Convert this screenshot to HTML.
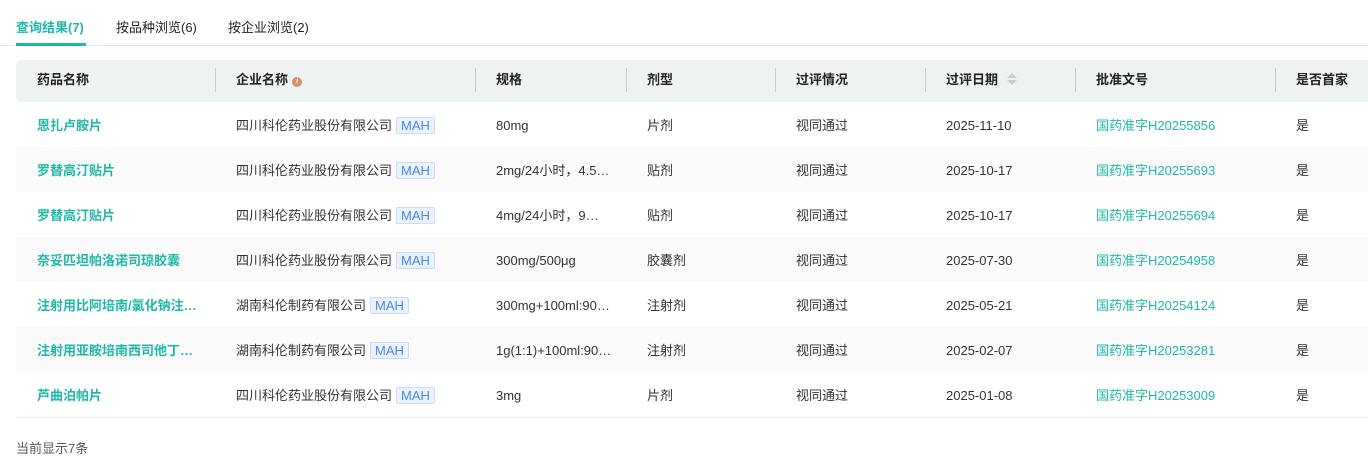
<!DOCTYPE html>
<html><head><meta charset="utf-8"><style>
*{margin:0;padding:0;box-sizing:border-box}
body{width:1368px;height:472px;overflow:hidden;background:#fff;font-family:"Liberation Sans","Noto Sans CJK SC",sans-serif;font-size:13px;color:#333}
.tabs{position:absolute;top:0;left:0;width:1368px;height:46px;border-bottom:1px solid #e8e8e8}
.tab{position:absolute;top:19px;font-size:13px;color:#222;line-height:18px}
.tab.a{color:#1fb8a6;font-weight:bold}
.ul{position:absolute;left:16px;top:43px;width:70px;height:3px;background:#1fb8a6}
.hdr{position:absolute;left:16px;top:60px;width:1380px;height:42px;background:#eff2f3;border-radius:6px}
.h{position:absolute;top:71px;font-weight:bold;color:#222;line-height:18px;height:18px}
.dv{position:absolute;top:68px;width:1px;height:24px;background:#ccc}
.row{position:absolute;left:16px;width:1380px;height:45px}
.row.g{background:#fafafa}
.r{position:absolute;left:0;width:1368px;height:18px}
.c{position:absolute;top:0;white-space:nowrap;color:#333;line-height:18px;height:18px}
.t{color:#1fb8a6}
.n{font-weight:bold}
.mah{display:inline-block;margin-left:4px;padding:0 4px;border:1px solid #c9dcf7;background:#eaf2fe;color:#4a86e8;border-radius:2px;font-size:13px;line-height:15px;vertical-align:top;margin-top:0}
.bl{position:absolute;left:16px;top:417px;width:1352px;height:1px;background:#e8e8e8}
.ic{display:inline-block;width:10px;height:10px;border-radius:50%;background:#d9906a;color:#fff;font-size:7px;line-height:10px;text-align:center;font-style:italic;vertical-align:1px;margin-left:4px}
</style></head><body>
<div class="tabs"></div>
<div class="tab a" style="left:16px">查询结果(7)</div>
<div class="tab" style="left:116px">按品种浏览(6)</div>
<div class="tab" style="left:228px">按企业浏览(2)</div>
<div class="ul"></div>
<div class="hdr"></div>
<div class="h" style="left:37px">药品名称</div>
<div class="h" style="left:236px">企业名称<span class="ic">i</span></div>
<div class="h" style="left:496px">规格</div>
<div class="h" style="left:647px">剂型</div>
<div class="h" style="left:796px">过评情况</div>
<div class="h" style="left:946px">过评日期 <svg width="12" height="14" style="vertical-align:-2px;margin-left:4px"><path d="M6 1L11 6H1Z" fill="#c8cbd0"/><path d="M6 13L11 8H1Z" fill="#c8cbd0"/></svg></div>
<div class="h" style="left:1096px">批准文号</div>
<div class="h" style="left:1296px">是否首家</div>
<div class="dv" style="left:215px"></div><div class="dv" style="left:475px"></div><div class="dv" style="left:626px"></div><div class="dv" style="left:775px"></div><div class="dv" style="left:925px"></div><div class="dv" style="left:1075px"></div><div class="dv" style="left:1275px"></div>

<div class="row" style="top:102px"></div>
<div class="row g" style="top:147px"></div>
<div class="row" style="top:192px"></div>
<div class="row g" style="top:237px"></div>
<div class="row" style="top:282px"></div>
<div class="row g" style="top:327px"></div>
<div class="row" style="top:372px"></div>

<div class="r" style="top:117px">
<div class="c t n" style="left:37px">恩扎卢胺片</div><div class="c" style="left:236px">四川科伦药业股份有限公司<span class="mah">MAH</span></div><div class="c" style="left:496px">80mg</div><div class="c" style="left:647px">片剂</div><div class="c" style="left:796px">视同通过</div><div class="c" style="left:946px">2025-11-10</div><div class="c t" style="left:1096px">国药准字H20255856</div><div class="c" style="left:1296px">是</div>
</div>
<div class="r" style="top:162px">
<div class="c t n" style="left:37px">罗替高汀贴片</div><div class="c" style="left:236px">四川科伦药业股份有限公司<span class="mah">MAH</span></div><div class="c" style="left:496px">2mg/24小时，4.5…</div><div class="c" style="left:647px">贴剂</div><div class="c" style="left:796px">视同通过</div><div class="c" style="left:946px">2025-10-17</div><div class="c t" style="left:1096px">国药准字H20255693</div><div class="c" style="left:1296px">是</div>
</div>
<div class="r" style="top:207px">
<div class="c t n" style="left:37px">罗替高汀贴片</div><div class="c" style="left:236px">四川科伦药业股份有限公司<span class="mah">MAH</span></div><div class="c" style="left:496px">4mg/24小时，9…</div><div class="c" style="left:647px">贴剂</div><div class="c" style="left:796px">视同通过</div><div class="c" style="left:946px">2025-10-17</div><div class="c t" style="left:1096px">国药准字H20255694</div><div class="c" style="left:1296px">是</div>
</div>
<div class="r" style="top:252px">
<div class="c t n" style="left:37px">奈妥匹坦帕洛诺司琼胶囊</div><div class="c" style="left:236px">四川科伦药业股份有限公司<span class="mah">MAH</span></div><div class="c" style="left:496px">300mg/500μg</div><div class="c" style="left:647px">胶囊剂</div><div class="c" style="left:796px">视同通过</div><div class="c" style="left:946px">2025-07-30</div><div class="c t" style="left:1096px">国药准字H20254958</div><div class="c" style="left:1296px">是</div>
</div>
<div class="r" style="top:297px">
<div class="c t n" style="left:37px">注射用比阿培南/氯化钠注…</div><div class="c" style="left:236px">湖南科伦制药有限公司<span class="mah">MAH</span></div><div class="c" style="left:496px">300mg+100ml:90…</div><div class="c" style="left:647px">注射剂</div><div class="c" style="left:796px">视同通过</div><div class="c" style="left:946px">2025-05-21</div><div class="c t" style="left:1096px">国药准字H20254124</div><div class="c" style="left:1296px">是</div>
</div>
<div class="r" style="top:342px">
<div class="c t n" style="left:37px">注射用亚胺培南西司他丁…</div><div class="c" style="left:236px">湖南科伦制药有限公司<span class="mah">MAH</span></div><div class="c" style="left:496px">1g(1:1)+100ml:90…</div><div class="c" style="left:647px">注射剂</div><div class="c" style="left:796px">视同通过</div><div class="c" style="left:946px">2025-02-07</div><div class="c t" style="left:1096px">国药准字H20253281</div><div class="c" style="left:1296px">是</div>
</div>
<div class="r" style="top:387px">
<div class="c t n" style="left:37px">芦曲泊帕片</div><div class="c" style="left:236px">四川科伦药业股份有限公司<span class="mah">MAH</span></div><div class="c" style="left:496px">3mg</div><div class="c" style="left:647px">片剂</div><div class="c" style="left:796px">视同通过</div><div class="c" style="left:946px">2025-01-08</div><div class="c t" style="left:1096px">国药准字H20253009</div><div class="c" style="left:1296px">是</div>
</div>
<div class="bl"></div>
<div class="c" style="left:16px;top:440px;color:#555">当前显示7条</div>
</body></html>
